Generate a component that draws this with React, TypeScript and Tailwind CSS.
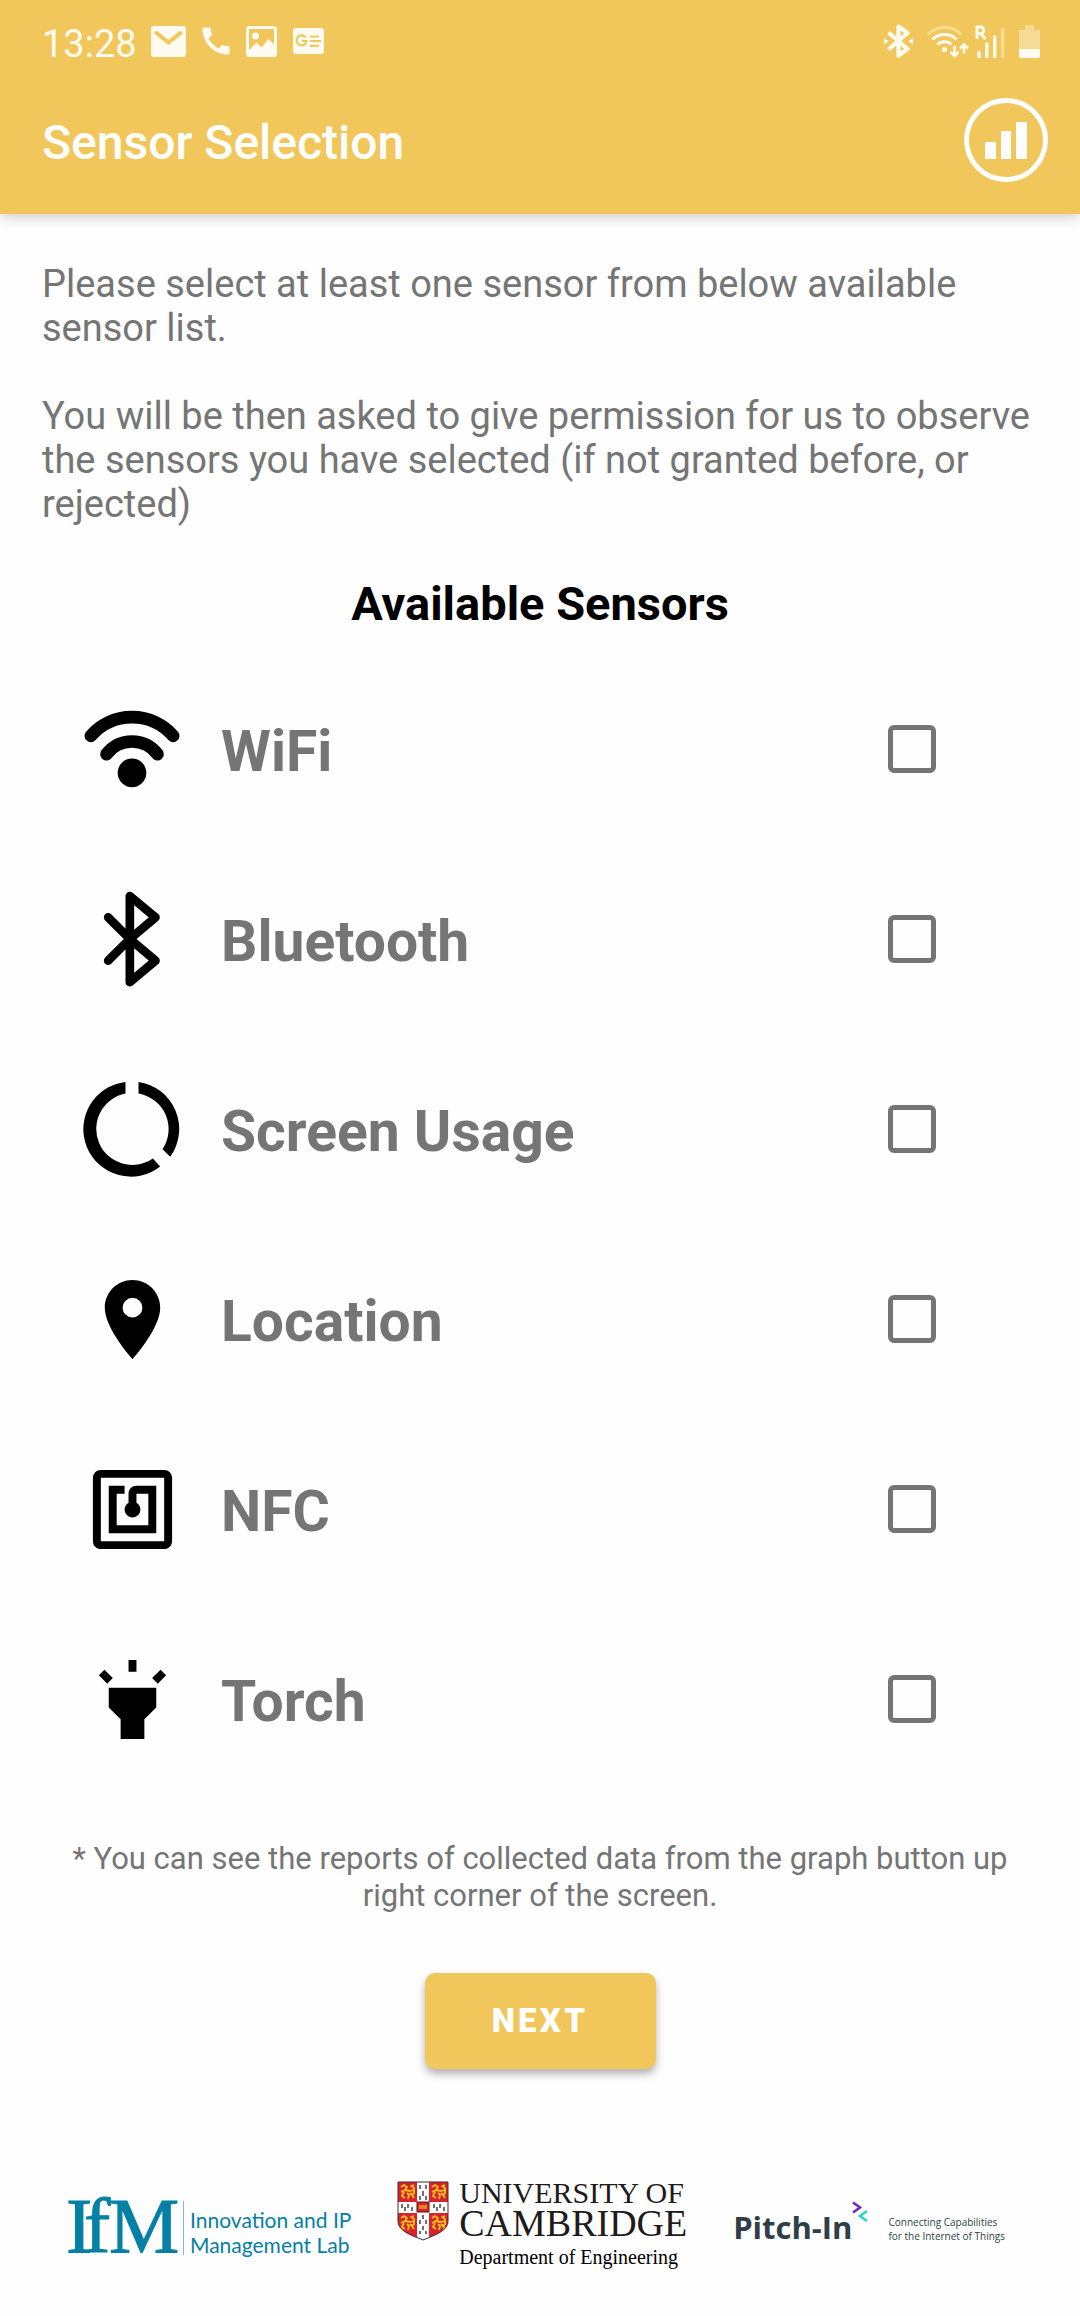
import { useState } from "react";
import type { ReactNode } from "react";
import { MdCall, MdHighlight, MdNfc, MdPlace } from "react-icons/md";

function MailIcon() {
  return (
    <svg width="35" height="31" viewBox="0 0 35 31" aria-hidden="true">
      <rect width="35" height="31" rx="3" fill="#fffbf0" />
      <path d="M5.500 7 17.500 16.500 29.500 7" fill="none" stroke="#f1c75b" strokeWidth="4" strokeLinecap="round" />
    </svg>
  );
}

function GalleryIcon() {
  return (
    <svg width="31" height="31" viewBox="0 0 31 31" aria-hidden="true">
      <rect x="1.500" y="1.500" width="28" height="28" rx="2" fill="none" stroke="#fffbf0" strokeWidth="3" />
      <circle cx="9.500" cy="10" r="3.500" fill="#fffbf0" />
      <path d="M2 25l8.500-8.500 5 5 7-8.500 7 7v8.500H2z" fill="#fffbf0" />
    </svg>
  );
}

function NewsIcon() {
  return (
    <svg width="31" height="26" viewBox="0 0 31 26" aria-hidden="true">
      <rect width="31" height="26" rx="3" fill="#fffbf0" />
      <g fill="none" stroke="#f1c75b" strokeWidth="2.200">
        <path d="M12.500 9.400A5 5 0 1 0 13.500 13H8.800" />
        <path d="M17 8.500h9M17 13h11M17 17.800h9" />
      </g>
    </svg>
  );
}

function StatusBluetooth() {
  return (
    <svg width="29" height="34" viewBox="0 0 29 34" aria-hidden="true">
      <path d="M4.500 8.500 23.500 25 14.500 31.500V2.500L23.500 9 4.500 25.500" fill="none" stroke="#fffbf0" strokeWidth="4.200" strokeLinejoin="round" />
      <path d="M0 14l4.500 3.200L0 20.500zM29 14l-4.500 3.200 4.500 3.300z" fill="#fffbf0" />
    </svg>
  );
}

function StatusWifi() {
  return (
    <svg width="42" height="33" viewBox="0 0 42 33" aria-hidden="true">
      <g fill="none" stroke="#fffbf0" strokeWidth="3">
        <path d="M1 9.500A22.500 22.500 0 0 1 34 9.500" opacity="0.4" />
        <path d="M5.500 14.500a17 17 0 0 1 24 0" />
        <path d="M10.500 19.500a10 10 0 0 1 14 0" />
        <path d="M27.500 21v9M23.500 27l4 4 4-4M37 28.500v-8M33 23.500l4-4 4 4" strokeWidth="2.600" />
      </g>
      <circle cx="17.500" cy="24.500" r="2.600" fill="#fffbf0" />
    </svg>
  );
}

function StatusSignal() {
  return (
    <svg width="30" height="33" viewBox="0 0 30 33" aria-hidden="true">
      <g fill="none" stroke="#fffbf0">
        <path d="M2 14V2h3.500a3.300 3.300 0 0 1 0 6.600H2M6 8.600 10.500 14" strokeWidth="2.800" />
        <path d="M4 27.500v4M11.800 19v12.500M19.700 12v19.500" strokeWidth="3.400" strokeLinecap="round" />
        <path d="M27.700 4.500v27" strokeWidth="3.400" strokeLinecap="round" opacity="0.4" />
      </g>
    </svg>
  );
}

function StatusBattery() {
  return (
    <svg width="21" height="33" viewBox="0 0 21 33" aria-hidden="true">
      <path d="M6 0h9v5h6v19H0V5h6z" fill="#fffbf0" opacity="0.4" />
      <path d="M0 24h21v7a2 2 0 0 1-2 2H2a2 2 0 0 1-2-2z" fill="#fffbf0" />
    </svg>
  );
}

function ChartIcon() {
  return (
    <svg width="84" height="84" viewBox="0 0 84 84" fill="white" aria-hidden="true">
      <circle cx="42" cy="42" r="39.500" fill="none" stroke="white" strokeWidth="5" />
      <path d="M21 44h11v17H21zM37 33h10v28H37zM52 24h11v37H52z" />
    </svg>
  );
}

function WifiIcon() {
  return (
    <svg width="114" height="114" viewBox="0 0 342 342" fill="none" stroke="black" strokeWidth="38" strokeLinecap="round" aria-hidden="true">
      <path d="M47.500 131.500a164 164 0 0 1 247 0M94.500 186.500a96 96 0 0 1 153 0" />
      <circle cx="171" cy="242.500" r="43" fill="black" stroke="none" />
    </svg>
  );
}

function BluetoothIcon() {
  return (
    <svg width="114" height="114" viewBox="0 0 342 342" fill="none" stroke="black" strokeWidth="26" strokeLinecap="round" strokeLinejoin="round" aria-hidden="true">
      <path d="M99.500 106l65 65 77 65-77 64.500V42l77 64-77 65-65 65" />
    </svg>
  );
}

function UsageIcon() {
  return (
    <svg width="114" height="114" viewBox="43.500 34.500 342 342" aria-hidden="true">
      <path d="M234 64.300A142.500 142.500 0 0 1 329 289L306 266A108 108 0 0 0 234 99.300z" />
      <path d="M195 64.300A142.500 142.500 0 1 0 299 318L277 294A108 108 0 1 1 195 99.300z" />
    </svg>
  );
}

const sensors: { id: string; label: string; icon: ReactNode }[] = [
  { id: "wifi", label: "WiFi", icon: <WifiIcon /> },
  { id: "bluetooth", label: "Bluetooth", icon: <BluetoothIcon /> },
  { id: "screen", label: "Screen Usage", icon: <UsageIcon /> },
  { id: "location", label: "Location", icon: <MdPlace size={95} /> },
  { id: "nfc", label: "NFC", icon: <MdNfc size={95} /> },
  { id: "torch", label: "Torch", icon: <MdHighlight size={95} /> },
];

function SensorRow({ id, label, icon }: { id: string; label: string; icon: ReactNode }) {
  const [checked, setChecked] = useState(false);
  return (
    <li className="flex h-[190px] items-center pr-36 pl-[75px]">
      <span className="flex w-[114px] shrink-0 justify-center text-black">{icon}</span>
      <label htmlFor={id} className="grow pt-1.5 pl-8 text-[57px] leading-[68px] font-bold text-[#757575]">
        {label}
      </label>
      <input
        id={id}
        type="checkbox"
        checked={checked}
        onChange={(e) => setChecked(e.target.checked)}
        className="size-12 shrink-0 appearance-none rounded-md border-[5px] border-[#757575] checked:bg-[#f1c75b]"
      />
    </li>
  );
}

function IfmLogo() {
  return (
    <svg width="114" height="92" viewBox="-2 0 114 92" fill="#0480a4" role="img" aria-label="IfM">
      <text y="71" fontFamily="'Liberation Serif', serif" fontSize="79" stroke="#0480a4" strokeWidth="1">
        <tspan x="-1">I</tspan>
        <tspan x="17">f</tspan>
        <tspan x="42">M</tspan>
      </text>
    </svg>
  );
}

function Lion({ x, y }: { x: number; y: number }) {
  return (
    <g transform={`translate(${x} ${y})`} fill="none" stroke="#f0c419" strokeWidth="1.800" strokeLinejoin="round">
      <path d="M2 4l3-2 3 2-2 3 5 1 4-1M15 2l-3 1 3 2v5l-2 2 2 3M6 7l-4 2M5 9l-2 4 3 2M8 10l2 2-1 4M11 10l3 3" />
    </g>
  );
}

function Shield() {
  return (
    <svg width="52" height="60" viewBox="0 0 52 60" aria-hidden="true">
      <path d="M1 1h50v39c0 10-13 14-25 19C14 54 1 50 1 40z" fill="#d9222e" />
      <path d="M20 1h12v20h19v11H32v24.500l-6 2.500-6-2.500V32H1V21h19z" fill="white" />
      <path d="M20 21h12v10H20z" fill="#d9222e" stroke="#5b1512" />
      <path d="M22 24h8v4h-8z" fill="#d98a1c" />
      <g stroke="#222" strokeWidth="1.300">
        <path d="M23 4v4M29 4v4M26 10v5M23 15v4M29 15v4M5 23v4M11 23v4M8 26v4M15 26v4M37 23v4M43 23v4M40 26v4M47 26v4M26 34v4M23 39v4M29 39v4M26 45v4M23 50v3M29 50v3" />
      </g>
      <Lion x={2} y={2} />
      <Lion x={33} y={2} />
      <Lion x={2} y={33} />
      <Lion x={33} y={33} />
      <path d="M1 1h50v39c0 10-13 14-25 19C14 54 1 50 1 40z" fill="none" stroke="#3a3030" />
    </svg>
  );
}

function PitchInMark() {
  return (
    <svg width="16" height="22" viewBox="0 0 16 22" fill="none" strokeWidth="2.600" aria-hidden="true">
      <path d="M1 1.500 8 6.500 1 11.500" stroke="#6c2bc4" />
      <path d="M15 10 8 15l7 5" stroke="#2cd5c0" />
    </svg>
  );
}

export default function App() {
  return (
    <div className="min-h-screen bg-[#fefefe] font-[Roboto,sans-serif]">
      <header className="bg-[#f1c75b] shadow-[0_3px_12px_rgba(0,0,0,0.2)]">
        <div className="flex h-[82px] items-center justify-between pr-10 pl-[42px] text-[#fffbf0]">
          <div className="flex items-center">
            <span className="pt-1.5 text-[38px] leading-[48px]">13:28</span>
            <div className="flex items-center pl-3.5">
              <MailIcon />
              <span className="px-3">
                <MdCall size={36} />
              </span>
              <GalleryIcon />
              <span className="pl-4">
                <NewsIcon />
              </span>
            </div>
          </div>
          <div className="flex items-center">
            <StatusBluetooth />
            <span className="pr-1.5 pl-3.5">
              <StatusWifi />
            </span>
            <StatusSignal />
            <span className="pl-3.5">
              <StatusBattery />
            </span>
          </div>
        </div>
        <div className="flex h-[132px] items-start justify-between pt-4 pr-8 pl-[42px]">
          <h1 className="pt-[17px] text-[48px] leading-[56px] font-medium text-white">Sensor Selection</h1>
          <button type="button" aria-label="Reports">
            <ChartIcon />
          </button>
        </div>
      </header>

      <main className="flex flex-col">
        <div className="flex flex-col gap-11 px-[42px] pt-12 text-[38px] leading-[44px] text-[#757575]">
          <p>Please select at least one sensor from below available sensor list.</p>
          <p>
            You will be then asked to give permission for us to observe the sensors you have selected (if not granted
            before, or rejected)
          </p>
        </div>
        <h2 className="pt-[50px] text-center text-[47px] leading-[56px] font-bold text-black">Available Sensors</h2>
        <ul className="pt-[22px]">
          {sensors.map((s) => (
            <SensorRow key={s.id} id={s.id} label={s.label} icon={s.icon} />
          ))}
        </ul>
        <p className="px-16 pt-[46px] text-center text-[31px] leading-[37px] text-[#757575]">
          * You can see the reports of collected data from the graph button up right corner of the screen.
        </p>
        <button
          type="button"
          className="mt-[59px] h-24 w-[231px] self-center rounded-[10px] bg-[#f1c75b] text-[33px] font-black tracking-widest text-white shadow-[0_5px_8px_rgba(0,0,0,0.3)]"
        >
          NEXT
        </button>
      </main>

      <footer className="flex items-start justify-between pt-28 pr-[75px] pl-[65px]">
        <div className="flex items-start gap-1 text-[#0480a4]">
          <IfmLogo />
          <div className="flex gap-1.5 pt-5">
            <span className="h-[54px] w-px bg-[#7dbccf]" />
            <p className="pt-1.5 font-[Lato,sans-serif] text-[21px] leading-[25px] whitespace-nowrap">
              Innovation and IP
              <br />
              Management Lab
            </p>
          </div>
        </div>
        <div className="flex gap-2.5">
          <Shield />
          <div className="font-['Liberation_Serif',serif] whitespace-nowrap text-[#1f1a1b]">
            <p className="text-[30px] leading-[23px]">UNIVERSITY OF</p>
            <p className="text-[38px] leading-[38px]">CAMBRIDGE</p>
            <p className="text-[20px] leading-[30px] text-black">Department of Engineering</p>
          </div>
        </div>
        <div className="flex items-start pt-5 whitespace-nowrap text-[#2f3e48]">
          <p className="pt-2 font-['Open_Sans',sans-serif] text-[31px] leading-[36px] font-bold">Pitch-In</p>
          <PitchInMark />
          <p className="pt-3.5 pl-5 font-['Open_Sans',sans-serif] text-[10px] leading-[14px]">
            Connecting Capabilities
            <br />
            for the Internet of Things
          </p>
        </div>
      </footer>
    </div>
  );
}
